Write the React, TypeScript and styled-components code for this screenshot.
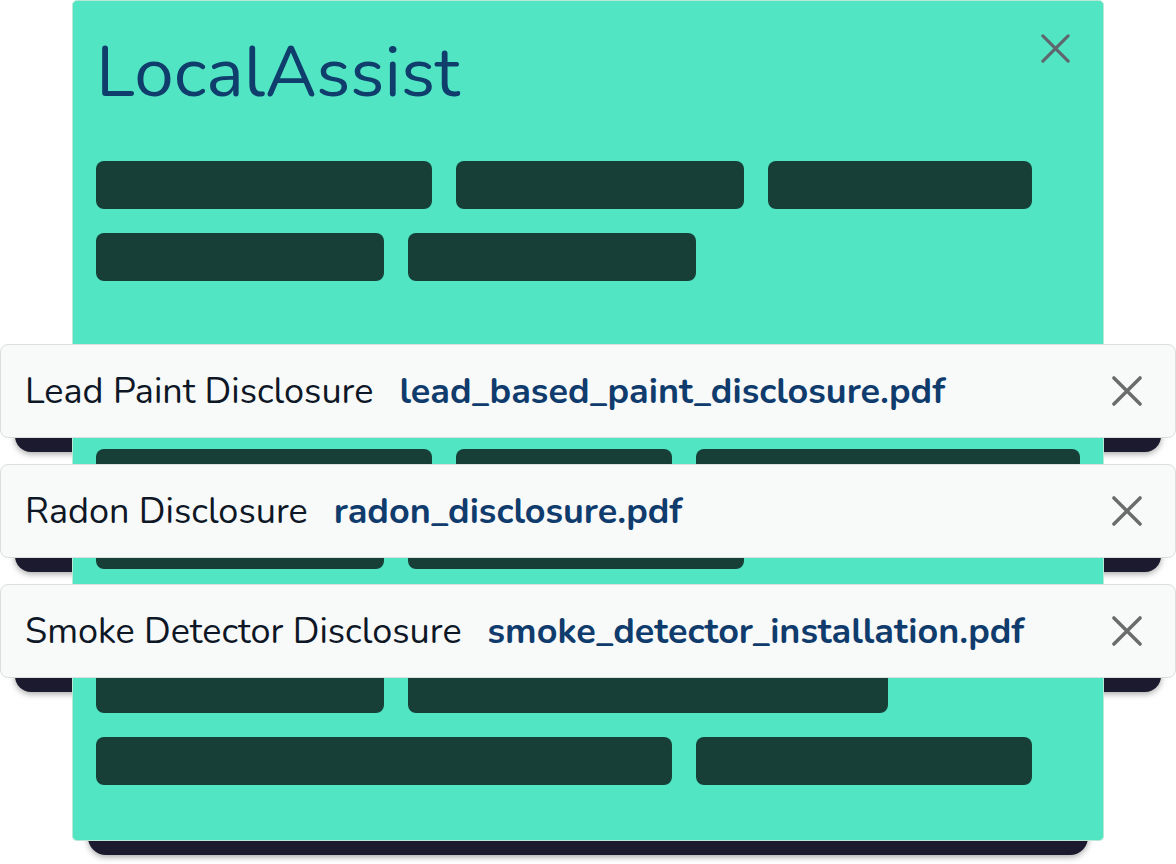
import React from "react";
import styled, { createGlobalStyle } from "styled-components";

const Global = createGlobalStyle`
  html, body { margin: 0; padding: 0; background: #ffffff; }
  body { font-family: "Nunito", "Lato", "Noto Sans", sans-serif; }
  * { box-sizing: border-box; }
`;

const Stage = styled.div`
  position: relative;
  width: 1176px;
  height: 864px;
  overflow: hidden;
  z-index: 0;
`;

const PanelWrap = styled.div`
  position: relative;
  width: 1032px;
  margin-left: 72px;
`;

const PanelShadow = styled.div`
  position: absolute;
  left: 16px;
  right: 16px;
  top: 40px;
  bottom: -14px;
  border-radius: 18px;
  background: #1b1a2f;
  box-shadow: 0 2px 6px rgba(0, 0, 0, 0.35);
  z-index: 1;
`;

const Panel = styled.section`
  position: relative;
  z-index: 2;
  background: #52e5c3;
  border: 1px solid #b9e8d6;
  border-radius: 5px;
  padding: 0 23px 55px;
`;

const Header = styled.header`
  display: flex;
  justify-content: space-between;
  align-items: flex-start;
  height: 160px;
`;

const Title = styled.h1`
  margin: 0;
  padding-top: 36px;
  font-family: "Nunito", "Lato", sans-serif;
  font-weight: 400;
  font-size: 71px;
  line-height: 71px;
  color: #0f3d6c;
  letter-spacing: 0;
`;

const IconButton = styled.button<{ $size: number; $color: string; $top: number; $right: number }>`
  display: flex;
  align-items: center;
  justify-content: center;
  margin-top: ${(p) => p.$top}px;
  margin-right: ${(p) => p.$right}px;
  padding: 0;
  border: 0;
  background: transparent;
  width: ${(p) => p.$size}px;
  height: ${(p) => p.$size}px;
  color: ${(p) => p.$color};
  cursor: pointer;
`;

const Group = styled.div<{ $top: number }>`
  display: flex;
  flex-direction: column;
  gap: 24px;
  margin-top: ${(p) => p.$top}px;
`;

const BarRow = styled.div`
  display: flex;
  gap: 24px;
`;

const Bar = styled.div<{ $w: number }>`
  width: ${(p) => p.$w}px;
  height: 48px;
  border-radius: 8px;
  background: #173f37;
`;

const CardList = styled.div`
  position: absolute;
  left: 0;
  top: 344px;
  width: 1176px;
  display: flex;
  flex-direction: column;
  gap: 26px;
`;

const CardWrap = styled.div`
  position: relative;
`;

const CardShadow = styled.div`
  position: absolute;
  left: 15px;
  right: 15px;
  top: 20px;
  bottom: -14px;
  border-radius: 16px;
  background: #1b1a2f;
  box-shadow: 0 2px 6px rgba(0, 0, 0, 0.35);
  z-index: 1;
`;

const Card = styled.div`
  position: relative;
  z-index: 3;
  height: 94px;
  display: flex;
  align-items: center;
  padding: 0 32px 0 24px;
  background: #f8f9f9;
  border: 1px solid #d9dede;
  border-radius: 8px;
`;

const Label = styled.span`
  font-size: 36px;
  color: #0e1726;
  font-weight: 400;
`;

const FileName = styled.span`
  margin-left: 26px;
  font-size: 36px;
  font-weight: 700;
  color: #0f3c6d;
  flex: 1;
`;

const Cross = ({ size, stroke }: { size: number; stroke: number }) => (
  <svg width={size} height={size} viewBox="0 0 28 28" fill="none">
    <path
      d="M1.8 1.8 L26.2 26.2 M26.2 1.8 L1.8 26.2"
      stroke="currentColor"
      strokeWidth={stroke}
      strokeLinecap="round"
    />
  </svg>
);

const groupA = [
  [336, 288, 264],
  [288, 288],
];

const groupB = [
  [336, 216, 384],
  [288, 336],
  [312, 288, 240],
  [288, 480],
  [576, 336],
];

const docs = [
  { label: "Lead Paint Disclosure", file: "lead_based_paint_disclosure.pdf" },
  { label: "Radon Disclosure", file: "radon_disclosure.pdf" },
  { label: "Smoke Detector Disclosure", file: "smoke_detector_installation.pdf" },
];

export default function App() {
  return (
    <>
      <Global />
      <Stage>
        <PanelWrap>
          <PanelShadow />
          <Panel>
            <Header>
              <Title>LocalAssist</Title>
              <IconButton $size={29} $color="#5f676d" $top={33} $right={10} aria-label="Close">
                <Cross size={29} stroke={3} />
              </IconButton>
            </Header>
            <Group $top={0}>
              {groupA.map((row, i) => (
                <BarRow key={i}>
                  {row.map((w, j) => (
                    <Bar key={j} $w={w} />
                  ))}
                </BarRow>
              ))}
            </Group>
            <Group $top={168}>
              {groupB.map((row, i) => (
                <BarRow key={i}>
                  {row.map((w, j) => (
                    <Bar key={j} $w={w} />
                  ))}
                </BarRow>
              ))}
            </Group>
          </Panel>
        </PanelWrap>
        <CardList>
          {docs.map((d) => (
            <CardWrap key={d.file}>
              <CardShadow />
              <Card>
                <Label>{d.label}</Label>
                <FileName>{d.file}</FileName>
                <IconButton $size={32} $color="#6b6b6b" $top={0} $right={0} aria-label="Remove">
                  <Cross size={30} stroke={3.2} />
                </IconButton>
              </Card>
            </CardWrap>
          ))}
        </CardList>
      </Stage>
    </>
  );
}
